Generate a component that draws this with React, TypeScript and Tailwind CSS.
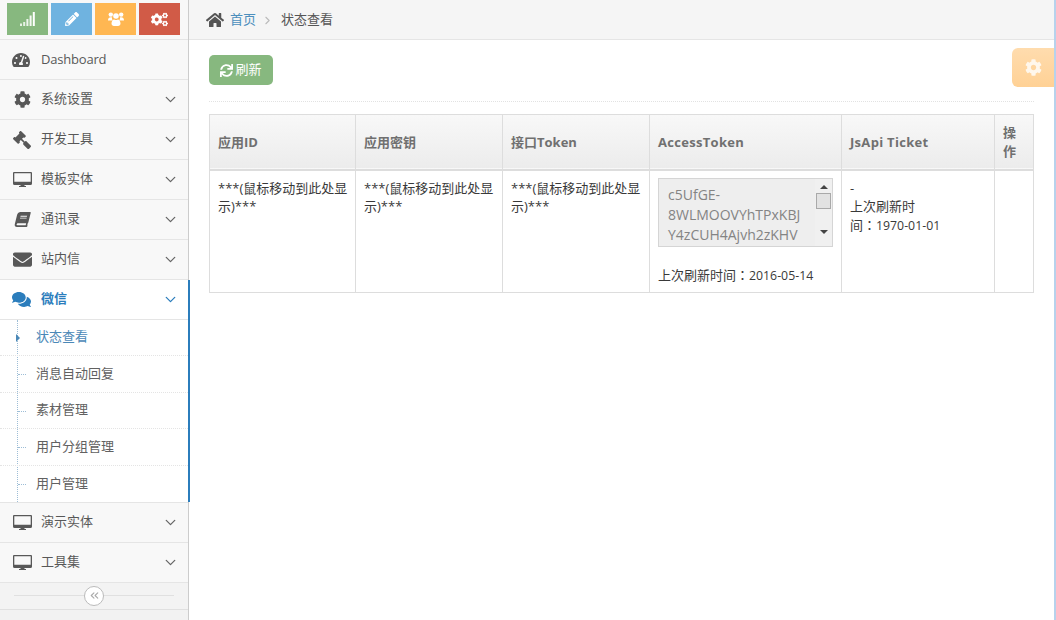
import { ChevronDown, ChevronRight, ChevronsLeft } from 'lucide-react';
import {
  FaBook,
  FaCog,
  FaCogs,
  FaComments,
  FaEnvelope,
  FaGavel,
  FaHome,
  FaPencilAlt,
  FaSync,
  FaTachometerAlt,
} from 'react-icons/fa';

const fontStack = "font-['Open_Sans','Noto_Sans_CJK_SC',sans-serif]";

function DesktopIcon() {
  return (
    <svg width="19" height="15" viewBox="0 0 19 15" fill="currentColor">
      <path
        fillRule="evenodd"
        d="M1 0h17a1 1 0 0 1 1 1v10.5a1.5 1.5 0 0 1-1.5 1.5h-16A1.5 1.5 0 0 1 0 11.500V1a1 1 0 0 1 1-1zM1.300 1.300v8.400h16.400V1.300z"
      />
      <path d="M7.500 13h4v1h1.500v1H6v-1h1.500z" />
    </svg>
  );
}

function SignalIcon() {
  return (
    <svg width="15" height="14" viewBox="0 0 15 14" fill="currentColor">
      <rect x="0" y="11.500" width="2" height="2.500" opacity="0.8" />
      <rect x="3.200" y="10" width="2" height="4" opacity="0.8" />
      <rect x="6.400" y="7" width="2" height="7" opacity="0.85" />
      <rect x="9.600" y="3.500" width="2" height="10.500" opacity="0.9" />
      <rect x="12.800" y="0" width="2" height="14" />
    </svg>
  );
}

function UsersIcon() {
  return (
    <svg width="16" height="14" viewBox="0 0 16 14" fill="currentColor">
      <circle cx="8" cy="4" r="2.800" />
      <circle cx="2.800" cy="2.600" r="2.200" />
      <circle cx="13.200" cy="2.600" r="2.200" />
      <path d="M0 8.500C0 6 1.200 5.200 2.800 5.200c.5 0 .9.100 1.200.3-.2 1.300.3 2.300 1 3H0z" />
      <path d="M16 8.500c0-2.500-1.200-3.300-2.800-3.300-.5 0-.9.100-1.200.3.200 1.300-.3 2.300-1 3H16z" />
      <path d="M3.500 11.500c0-2.300 1.300-4 2.700-4 .6.400 1.100.6 1.800.6s1.200-.2 1.800-.6c1.400 0 2.700 1.700 2.700 4 0 1.500-1 2.500-2.500 2.500h-4c-1.500 0-2.500-1-2.500-2.500z" />
    </svg>
  );
}

const topNav = [
  { icon: <FaCog size={17} />, label: '系统设置' },
  { icon: <FaGavel size={18} className="-scale-x-100" />, label: '开发工具' },
  { icon: <DesktopIcon />, label: '模板实体' },
  { icon: <FaBook size={15} className="-skew-x-[14deg]" />, label: '通讯录' },
  { icon: <FaEnvelope size={19} />, label: '站内信' },
];

const subNav = ['状态查看', '消息自动回复', '素材管理', '用户分组管理', '用户管理'];

function NavRow({ icon, label }: { icon: React.ReactNode; label: string }) {
  return (
    <div className="flex h-10 items-center border-b border-[#e5e5e5] bg-[#f8f8f8] pr-[9px] text-[#585858]">
      <span className="flex w-[41px] justify-center pl-[3px]">{icon}</span>
      <span className="flex-1 pb-[2px] text-[13px]">{label}</span>
      <ChevronDown size={17} strokeWidth={1.8} className="text-[#666]" />
    </div>
  );
}

function ShortcutButton({ color, children }: { color: string; children: React.ReactNode }) {
  return <div className={`flex h-8 w-[41px] items-center justify-center text-white ${color}`}>{children}</div>;
}

function Colon() {
  return <span className="font-['Noto_Sans_CJK_TC',sans-serif]">：</span>;
}

export default function App() {
  return (
    <div className={`flex h-[620px] w-[1056px] overflow-hidden bg-white text-[13px] text-[#393939] ${fontStack}`}>
      <aside className="flex h-full w-[189px] shrink-0 flex-col border-r border-[#ccc] bg-[#f2f2f2]">
        <div className="flex h-10 shrink-0 gap-[3px] border-b border-[#e5e5e5] bg-[#f8f8f8] pl-[7px] pt-[3px]">
          <ShortcutButton color="bg-[#87b87f]">
            <SignalIcon />
          </ShortcutButton>
          <ShortcutButton color="bg-[#6fb3e0]">
            <FaPencilAlt size={14} />
          </ShortcutButton>
          <ShortcutButton color="bg-[#ffb752]">
            <UsersIcon />
          </ShortcutButton>
          <ShortcutButton color="bg-[#d15b47]">
            <FaCogs size={17} />
          </ShortcutButton>
        </div>

        <div className="flex h-10 items-center border-b border-[#e5e5e5] bg-[#f8f8f8] text-[#585858]">
          <span className="flex w-[41px] justify-center pl-[1px]">
            <FaTachometerAlt size={18} />
          </span>
          <span className="tracking-[-0.2px]">Dashboard</span>
        </div>
        {topNav.map((item) => (
          <NavRow key={item.label} {...item} />
        ))}

        <div className="relative -mr-[2px] bg-white">
          <div className="absolute bottom-0 right-0 top-0 z-10 w-[2px] bg-[#2b7dbc]" />
          <div className="flex h-10 items-center border-b border-[#e5e5e5] pr-[11px] text-[#2b7dbc]">
            <span className="flex w-[41px] justify-center pl-[1px]">
              <FaComments size={19} />
            </span>
            <span className="flex-1 pb-[2px] font-semibold">微信</span>
            <ChevronDown size={17} strokeWidth={1.8} />
          </div>
          <div className="relative">
            <div className="absolute bottom-0 left-[17px] top-0 border-l border-dotted border-[#9dbdd6]" />
            {subNav.map((label, i) => (
              <div
                key={label}
                className={`relative flex h-[36.4px] items-center pb-[1px] pl-[36px] ${
                  i < subNav.length - 1 ? 'border-b border-dotted border-[#e4e4e4]' : ''
                } ${i === 0 ? 'text-[#4b88b7]' : 'text-[#616161]'}`}
              >
                {i === 0 ? (
                  <span className="absolute left-[16px] top-[14px] h-0 w-0 border-y-[4px] border-l-[4px] border-y-transparent border-l-[#4b88b7]" />
                ) : (
                  <span className="absolute left-[18px] top-[18px] w-[8px] border-t border-dotted border-[#9dbdd6]" />
                )}
                {label}
              </div>
            ))}
          </div>
        </div>

        <div className="border-t border-[#e5e5e5]">
          <NavRow icon={<DesktopIcon />} label="演示实体" />
          <NavRow icon={<DesktopIcon />} label="工具集" />
        </div>

        <div className="relative flex h-[27px] shrink-0 items-center border-b border-[#e0e0e0] bg-[#f3f3f3] px-[14px]">
          <div className="h-px flex-1 bg-[#e0e0e0]" />
          <span className="absolute left-[84px] top-[3px] flex h-5 w-5 items-center justify-center rounded-full border border-[#bbb] bg-white text-[#aaa]">
            <ChevronsLeft size={13} />
          </span>
        </div>
      </aside>

      <main className="relative min-w-0 flex-1 border-r-2 border-[#b7d2ec]">
        <div className="flex h-10 items-center border-b border-[#e5e5e5] bg-[#f5f5f5] pl-[17px]">
          <FaHome size={18} className="text-[#555]" />
          <span className="ml-[6px] text-[#4c8fbd]">首页</span>
          <ChevronRight size={13} strokeWidth={2} className="ml-[5px] mt-px text-[#bbb]" />
          <span className="ml-[7px] text-[#555]">状态查看</span>
        </div>

        <div className="px-5 pt-[15px]">
          <button className="flex h-[30px] w-16 items-center justify-center gap-[2px] rounded-[5px] bg-[#87b87f] text-white">
            <FaSync size={13} />
            刷新
          </button>
          <div className="mt-4 border-t border-dotted border-[#e2e2e2]" />

          <table className="mt-3 w-[824px] table-fixed border-collapse border border-[#ddd]">
            <colgroup>
              <col className="w-[146px]" />
              <col className="w-[147px]" />
              <col className="w-[147px]" />
              <col className="w-[192px]" />
              <col className="w-[153px]" />
              <col className="w-[39px]" />
            </colgroup>
            <thead>
              <tr className="h-[55px] border-b-2 border-[#ddd] bg-gradient-to-b from-[#f8f8f8] to-[#ececec] text-left text-[#707070]">
                <th className="border-x border-[#ddd] px-2 pt-px font-bold">应用ID</th>
                <th className="border-x border-[#ddd] px-2 pt-px font-bold">应用密钥</th>
                <th className="border-x border-[#ddd] px-2 pt-px font-bold">接口Token</th>
                <th className="border-x border-[#ddd] px-2 pt-px font-bold tracking-[0.3px]">AccessToken</th>
                <th className="border-x border-[#ddd] px-2 pt-px font-bold tracking-[0.3px]">JsApi Ticket</th>
                <th className="border-x border-[#ddd] px-2 font-bold leading-[19px]">操作</th>
              </tr>
            </thead>
            <tbody>
              <tr className="h-[123px] align-top leading-[18.5px]">
                {[0, 1, 2].map((i) => (
                  <td key={i} className="border border-[#ddd] pl-2 pr-1 pt-2">
                    ***(鼠标移动到此处显示)***
                  </td>
                ))}
                <td className="border border-[#ddd] px-2 pt-2">
                  <div className="-mt-px flex h-[69px] overflow-hidden border border-[#d5d5d5] bg-[#eee] text-[14px] text-[#848484]">
                    <div className="min-w-0 flex-1 overflow-hidden whitespace-nowrap pl-[9px] pt-[6px] leading-5">
                      c5UfGE-
                      <br />
                      8WLMOOVYhTPxKBJ
                      <br />
                      Y4zCUH4Ajvh2zKHV
                    </div>
                    <div className="flex w-[17px] shrink-0 flex-col items-center bg-[#f0f0f0] pt-[6px]">
                      <span className="h-0 w-0 border-x-[4px] border-b-[4px] border-x-transparent border-b-[#444]" />
                      <span className="mt-[4px] h-[16px] w-[15px] border border-[#a9a9a9] bg-[#e2e2e2]" />
                      <span className="mt-[21px] h-0 w-0 border-x-[4px] border-t-[4px] border-x-transparent border-t-[#444]" />
                    </div>
                  </div>
                  <div className="mt-[19px]">
                    上次刷新时间
                    <Colon />
                    <span className="text-[12.3px]">2016-05-14</span>
                  </div>
                </td>
                <td className="border border-[#ddd] px-2 pt-2">
                  -
                  <br />
                  上次刷新时
                  <br />
                  间<Colon />
                  <span className="text-[12.3px]">1970-01-01</span>
                </td>
                <td className="border border-[#ddd]" />
              </tr>
            </tbody>
          </table>
        </div>

        <div className="absolute right-0 top-[48px] flex h-[39px] w-[42px] items-center justify-center rounded-l-[6px] bg-gradient-to-b from-[#ffdcae] to-[#ffd195] text-[#fff7ec]">
          <FaCog size={17} />
        </div>
      </main>
    </div>
  );
}
